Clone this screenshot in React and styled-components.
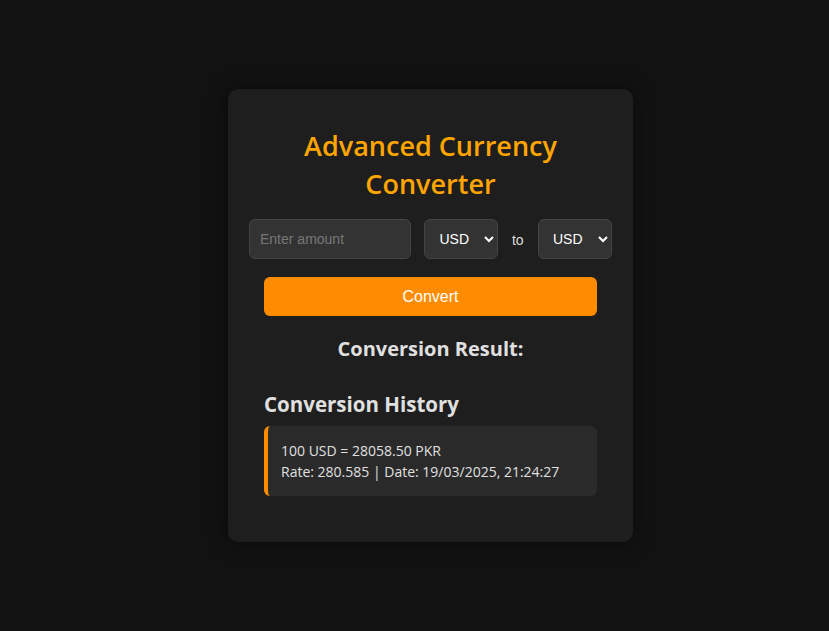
import styled, { createGlobalStyle } from "styled-components";

const GlobalStyle = createGlobalStyle`
  html, body {
    margin: 0;
    padding: 0;
    background: #121212;
    font-family: "Open Sans", "Noto Sans", sans-serif;
  }
`;

export default function App() {
  const history = [
    {
      line: "100 USD = 28058.50 PKR",
      meta: "Rate: 280.585 | Date: 19/03/2025, 21:24:27",
    },
  ];

  return (
    <>
      <GlobalStyle />
      <Page>
        <Card>
          <Title>Advanced Currency Converter</Title>
          <InputRow>
            <Amount placeholder="Enter amount" />
            <Select defaultValue="USD">
              <option>USD</option>
              <option>PKR</option>
              <option>EUR</option>
            </Select>
            <To>to</To>
            <Select defaultValue="USD">
              <option>USD</option>
              <option>PKR</option>
              <option>EUR</option>
            </Select>
          </InputRow>
          <ConvertButton>Convert</ConvertButton>
          <Result>Conversion Result:</Result>
          <History>
            <h2>Conversion History</h2>
            {history.map((item, index) => (
              <HistoryItem key={index}>
                <p>{item.line}</p>
                <p>{item.meta}</p>
              </HistoryItem>
            ))}
          </History>
        </Card>
      </Page>
    </>
  );
}

const Page = styled.div`
  min-height: 631px;
  display: flex;
  justify-content: center;
  padding: 89px 0 0 32px;
  box-sizing: border-box;
`;

const Card = styled.div`
  width: 405px;
  height: 453px;
  box-sizing: border-box;
  background: #1e1e1e;
  border-radius: 10px;
  padding: 38px 20px 20px;
  box-shadow: 0 0 20px rgba(0, 0, 0, 0.5);
  display: flex;
  flex-direction: column;
`;

const Title = styled.h1`
  margin: 0 0 16px;
  text-align: center;
  color: #ffa500;
  font-size: 27px;
  font-weight: 600;
  line-height: 38px;
  padding: 0 30px;
`;

const InputRow = styled.div`
  display: flex;
  align-items: center;
  justify-content: space-between;
  padding: 0 1px 0 1px;
`;

const Amount = styled.input`
  width: 162px;
  height: 40px;
  box-sizing: border-box;
  background: #333;
  border: 1px solid #444;
  border-radius: 6px;
  color: #fff;
  padding: 0 10px;
  font-family: "Liberation Sans", Arial, sans-serif;
  font-size: 14px;
  outline: none;
  &::placeholder {
    color: #777;
  }
`;

const Select = styled.select`
  width: 74px;
  height: 40px;
  box-sizing: border-box;
  background: #333;
  border: 1px solid #444;
  border-radius: 6px;
  color: #fff;
  padding: 0 6px 0 10px;
  font-family: "Liberation Sans", Arial, sans-serif;
  font-size: 14px;
`;

const To = styled.span`
  color: #ddd;
  font-family: "Liberation Sans", Arial, sans-serif;
  font-size: 14px;
  padding: 2px 1px 0 0;
`;

const ConvertButton = styled.button`
  margin: 18px 16px 0;
  height: 39px;
  border: none;
  border-radius: 6px;
  background: #ff8c00;
  color: #fff;
  font-family: "Liberation Sans", Arial, sans-serif;
  font-size: 16px;
  cursor: pointer;
`;

const Result = styled.h3`
  margin: 19px 0 0;
  text-align: center;
  color: #e0e0e0;
  font-size: 20px;
  font-weight: 700;
  line-height: 28px;
`;

const History = styled.div`
  margin: 26px 16px 0;
  h2 {
    margin: 0 0 7px;
    color: #e0e0e0;
    font-size: 20.5px;
    font-weight: 700;
    line-height: 30px;
  }
`;

const HistoryItem = styled.div`
  background: #2a2a2a;
  border-left: 4px solid #ff8c00;
  border-radius: 6px;
  padding: 14px 13px 14px;
  color: #e0e0e0;
  font-size: 14px;
  p {
    margin: 0;
    line-height: 21px;
  }
`;
